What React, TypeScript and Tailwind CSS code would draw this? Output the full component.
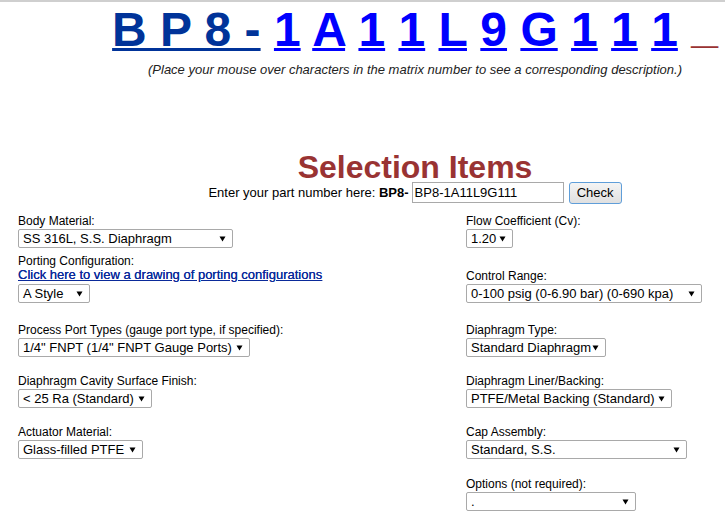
import React from "react";

const FONT = { fontFamily: '"Liberation Sans", Arial, sans-serif' };

function Arrow() {
  return (
    <svg width="7" height="6" viewBox="0 0 7 6" className="shrink-0">
      <path d="M0.5 0.5H6.5L3.5 5.5Z" fill="#000" />
    </svg>
  );
}

function Sel({ w, text, mt = "mt-[1px]" }: { w: string; text: string; mt?: string }) {
  return (
    <div
      className={`${mt} ${w} h-[19px] flex items-center justify-between border border-[#a9a9a9] rounded-[2px] bg-white pl-[4px] pr-[6px] text-[13px] leading-none text-black whitespace-nowrap`}
    >
      <span>{text}</span>
      <Arrow />
    </div>
  );
}

function Field({ label, w, text, cls = "" }: { label: string; w: string; text: string; cls?: string }) {
  return (
    <div className={cls}>
      <div className="text-[12px] leading-[14px] text-black whitespace-nowrap">{label}</div>
      <Sel w={w} text={text} />
    </div>
  );
}

const chars = ["1", "A", "1", "1", "L", "9", "G", "1", "1", "1"];

export default function App() {
  return (
    <div className="w-full min-h-[524px] bg-white overflow-hidden" style={FONT}>
      <div className="h-[2px] bg-[#cfcfcf]" />
      <div className="pl-[105px]">
        <div className="text-center whitespace-nowrap font-bold text-[48px] leading-[56px]">
          <a className="text-[#003399] underline decoration-[3px] underline-offset-[2px] cursor-pointer">B P 8 -</a>
          {chars.map((c, i) => (
            <React.Fragment key={i}>
              {" "}
              <a className="text-[#0000ff] underline decoration-[3px] underline-offset-[2px] cursor-pointer">{c}</a>
            </React.Fragment>
          ))}{" "}
          <span className="relative -top-[4px] text-[#993333]">_</span>
        </div>
        <div className="mt-[4px] text-center text-[13px] leading-[15px] italic text-[#222]">
          (Place your mouse over characters in the matrix number to see a corresponding description.)
        </div>
        <div className="mt-[75px] text-center text-[32px] leading-[30px] font-bold text-[#993333]">
          Selection Items
        </div>
        <div className="h-[22px] flex items-center justify-center text-[13px] text-black whitespace-nowrap">
          <span>Enter your part number here:&nbsp;</span>
          <b>BP8-</b>
          <div className="ml-[3px] w-[152px] h-[21px] border border-[#a9a9a9] flex items-center pl-[2px] self-start">
            BP8-1A11L9G111
          </div>
          <button className="ml-[5px] w-[53px] h-[22px] border border-[#5f9ed9] rounded-[3px] bg-gradient-to-b from-[#f4f4f4] to-[#e0e0e0] text-[13px] text-black">
            Check
          </button>
        </div>
      </div>

      <div className="mt-[10px] flex pl-[18px]">
        <div className="w-[448px] flex flex-col items-start">
          <Field label="Body Material:" w="w-[215px]" text="SS 316L, S.S. Diaphragm" />
          <div className="mt-[6px] text-[12px] leading-[14px] text-black">Porting Configuration:</div>
          <a className="text-[13px] leading-[14px] text-[#0a2a9a] underline cursor-pointer whitespace-nowrap [text-shadow:0_0_0.4px_#0a2a9a]">
            Click here to view a drawing of porting configurations
          </a>
          <Sel w="w-[72px]" text="A Style" mt="mt-[2px]" />
          <Field cls="mt-[20px]" label="Process Port Types (gauge port type, if specified):" w="w-[232px]" text={'1/4" FNPT (1/4" FNPT Gauge Ports)'} />
          <Field cls="mt-[17px]" label="Diaphragm Cavity Surface Finish:" w="w-[134px]" text="< 25 Ra (Standard)" />
          <Field cls="mt-[17px]" label="Actuator Material:" w="w-[125px]" text="Glass-filled PTFE" />
        </div>
        <div className="flex flex-col items-start">
          <Field label="Flow Coefficient (Cv):" w="w-[47px]" text="1.20" />
          <Field cls="mt-[21px]" label="Control Range:" w="w-[236px]" text="0-100 psig (0-6.90 bar) (0-690 kpa)" />
          <Field cls="mt-[20px]" label="Diaphragm Type:" w="w-[140px]" text="Standard Diaphragm" />
          <Field cls="mt-[17px]" label="Diaphragm Liner/Backing:" w="w-[206px]" text="PTFE/Metal Backing (Standard)" />
          <Field cls="mt-[17px]" label="Cap Assembly:" w="w-[221px]" text="Standard, S.S." />
          <Field cls="mt-[18px]" label="Options (not required):" w="w-[170px]" text="." />
        </div>
      </div>
    </div>
  );
}
